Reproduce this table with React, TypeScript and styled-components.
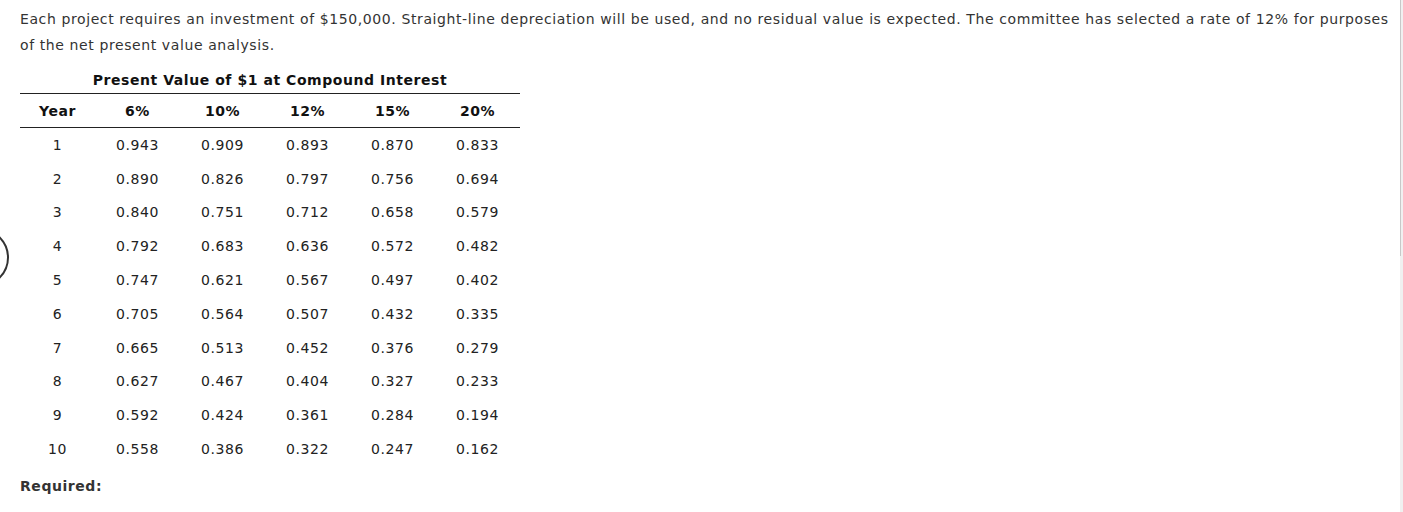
import React from "react";
import styled, { createGlobalStyle } from "styled-components";

const Global = createGlobalStyle`
  html, body { margin: 0; padding: 0; background: #fff; }
  body {
    font-family: Verdana, "DejaVu Sans", sans-serif;
    font-size: 14px;
    color: #333;
    overflow: hidden;
    letter-spacing: 0.55px;
  }
`;

const Page = styled.div`
  padding: 6px 0 0 20px;
  width: 1376px;
`;

const Intro = styled.p`
  margin: 0;
  line-height: 26px;
  color: #333;
  font-size: 14px;
  letter-spacing: 0.6px;
`;

const Table = styled.table`
  border-collapse: collapse;
  width: 500px;
  margin-top: 11px;
  color: #222;
`;

const Caption = styled.caption`
  font-weight: bold;
  color: #111;
  line-height: 22px;
  padding-bottom: 2px;
  text-align: center;
`;

const HeadCell = styled.th<{ $w: number }>`
  width: ${(p) => p.$w}px;
  height: 33px;
  padding: 0;
  font-weight: bold;
  color: #111;
  text-align: center;
  border-top: 1px solid #222;
  border-bottom: 1px solid #222;
`;

const Cell = styled.td`
  height: 33.8px;
  padding: 0;
  text-align: center;
  vertical-align: middle;
`;

const Required = styled.div`
  margin-top: 10px;
  font-weight: bold;
  line-height: 20px;
  color: #333;
`;

const NavCircle = styled.div`
  position: absolute;
  left: -50px;
  top: 228px;
  width: 55px;
  height: 55px;
  border: 2.5px solid #333;
  border-radius: 50%;
`;

const ScrollTrack = styled.div`
  position: fixed;
  top: 0;
  right: 0;
  width: 3px;
  height: 100%;
  background: #f0f0f0;
`;

const ScrollThumb = styled.div`
  width: 1px;
  height: 256px;
  background: #c8c8c8;
`;

const rates = ["6%", "10%", "12%", "15%", "20%"];
const data: string[][] = [
  ["0.943", "0.909", "0.893", "0.870", "0.833"],
  ["0.890", "0.826", "0.797", "0.756", "0.694"],
  ["0.840", "0.751", "0.712", "0.658", "0.579"],
  ["0.792", "0.683", "0.636", "0.572", "0.482"],
  ["0.747", "0.621", "0.567", "0.497", "0.402"],
  ["0.705", "0.564", "0.507", "0.432", "0.335"],
  ["0.665", "0.513", "0.452", "0.376", "0.279"],
  ["0.627", "0.467", "0.404", "0.327", "0.233"],
  ["0.592", "0.424", "0.361", "0.284", "0.194"],
  ["0.558", "0.386", "0.322", "0.247", "0.162"],
];

export default function App() {
  return (
    <>
      <Global />
      <NavCircle />
      <ScrollTrack>
        <ScrollThumb />
      </ScrollTrack>
      <Page>
        <Intro>
          Each project requires an investment of $150,000. Straight-line depreciation will be used, and no residual value is expected. The committee has selected a rate of 12% for purposes of the net present value analysis.
        </Intro>
        <Table>
          <Caption>Present Value of $1 at Compound Interest</Caption>
          <thead>
            <tr>
              <HeadCell $w={75}>Year</HeadCell>
              {rates.map((r) => (
                <HeadCell key={r} $w={85}>{r}</HeadCell>
              ))}
            </tr>
          </thead>
          <tbody>
            {data.map((row, i) => (
              <tr key={i}>
                <Cell>{i + 1}</Cell>
                {row.map((v, j) => (
                  <Cell key={j}>{v}</Cell>
                ))}
              </tr>
            ))}
          </tbody>
        </Table>
        <Required>Required:</Required>
      </Page>
    </>
  );
}
